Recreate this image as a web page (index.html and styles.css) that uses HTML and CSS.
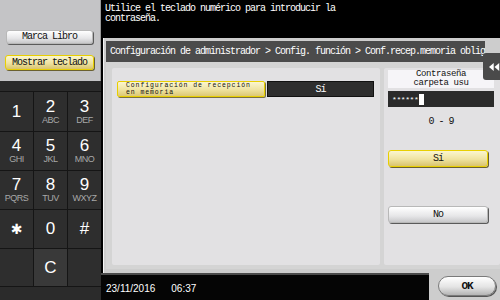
FILE: index.html
```html
<!DOCTYPE html>
<html lang="es">

<head>
    <meta charset="UTF-8" />
    <title>Configuración de administrador</title>
    <link rel="stylesheet" href="styles.css">
</head>

<body>
    <div class="screen">
        <aside class="side">
            <div class="side-top">
                <button class="btn btn-gray side-btn">Marca Libro</button>
                <button class="btn btn-yellow side-btn">Mostrar teclado</button>
            </div>
            <div class="keypad">
                <div class="key-strip"></div>
                <div class="key"><span class="num">1</span></div>
                <div class="key"><span class="num">2</span><span class="abc">ABC</span></div>
                <div class="key"><span class="num">3</span><span class="abc">DEF</span></div>
                <div class="key"><span class="num">4</span><span class="abc">GHI</span></div>
                <div class="key"><span class="num">5</span><span class="abc">JKL</span></div>
                <div class="key"><span class="num">6</span><span class="abc">MNO</span></div>
                <div class="key"><span class="num">7</span><span class="abc">PQRS</span></div>
                <div class="key"><span class="num">8</span><span class="abc">TUV</span></div>
                <div class="key"><span class="num">9</span><span class="abc">WXYZ</span></div>
                <div class="key"><span class="num star">✱</span></div>
                <div class="key"><span class="num">0</span></div>
                <div class="key"><span class="num">#</span></div>
                <div class="key key-empty"></div>
                <div class="key key-c"><span class="num">C</span></div>
                <div class="key key-empty"></div>
                <div class="key-strip"></div>
            </div>
        </aside>

        <main class="main">
            <div class="message">Utilice el teclado numérico para introducir la<br>contraseña.</div>

            <div class="panel">
                <div class="breadcrumb">Configuración de administrador &gt; Config. función &gt; Conf.recep.memoria oblig</div>
                <div class="collapse-tab">
                    <svg viewBox="0 0 14 10">
                        <path d="M6 0 L0 5 L6 10 Z M13 0 L7 5 L13 10 Z" />
                    </svg>
                </div>
                <div class="content">
                    <div class="settings">
                        <div class="setting-row">
                            <div class="setting-label">Configuración de recepción<br>en memoria</div>
                            <div class="setting-value">Sí</div>
                        </div>
                    </div>
                    <div class="entry">
                        <div class="entry-title">Contraseña<br>carpeta usu</div>
                        <div class="entry-field">******<span class="cursor"></span></div>
                        <div class="entry-range">0 - 9</div>
                        <button class="btn btn-yellow entry-btn entry-yes">Sí</button>
                        <button class="btn btn-gray entry-btn entry-no">No</button>
                    </div>
                </div>
            </div>

            <div class="footer">
                <div class="status">
                    <span>23/11/2016</span>
                    <span>06:37</span>
                </div>
                <div class="ok-area">
                    <button class="ok-btn">OK</button>
                </div>
            </div>
        </main>
    </div>
</body>

</html>
```

FILE: styles.css
```css
body {
    margin: 0;
    padding: 0;
    background-color: #000;
    font-family: "Liberation Mono", monospace;
}

.screen {
    width: 500px;
    height: 300px;
    display: grid;
    grid-template-columns: 101px 1fr;
    overflow: hidden;
}

/* left side with keypad */
.side {
    display: flex;
    flex-direction: column;
    background-color: #1c1c1c;
}

.side-top {
    height: 81px;
    background-color: #c4c4c6;
    display: flex;
    flex-direction: column;
    align-items: flex-start;
    padding: 30px 0 0 6px;
    box-sizing: border-box;
    border-right: 1px solid #9a9a9a;
}

.btn {
    font-family: "Liberation Mono", monospace;
    font-size: 10px;
    letter-spacing: -1px;
    color: #111;
    cursor: pointer;
    padding: 0;
}

.btn-gray {
    background: linear-gradient(#ffffff, #e6e6e8 60%, #c8c8ca);
    border: 1px solid #b8b8b8;
    border-radius: 3px;
    box-shadow: 1px 1px 0 #5a5a5a;
}

.btn-yellow {
    background: linear-gradient(#fbf6cf, #efe3a0 55%, #d9c46e);
    border: 1px solid #e8cf00;
    border-radius: 3px;
    box-shadow: 1px 1px 0 #6a6030;
}

.side-btn {
    width: 87px;
    height: 15px;
    margin-bottom: 11px;
}

.side-btn.btn-yellow {
    width: 89px;
    height: 17px;
    margin-left: -1px;
}

.keypad {
    flex: 1;
    display: grid;
    grid-template-columns: 33px 33px 33px;
    grid-template-rows: 10px 39px 38px 38px 38px 37px 1fr;
    gap: 1px;
    background-color: #151515;
}

.key-strip {
    grid-column: 1 / 4;
    background-color: #2b2b2b;
}

.key {
    background-color: #2e2e2e;
    display: flex;
    flex-direction: column;
    align-items: center;
    justify-content: center;
    font-family: "Liberation Sans", Arial, sans-serif;
    color: #fff;
}

.key .num {
    font-size: 17px;
    line-height: 16px;
}

.key .star {
    font-family: "DejaVu Sans", sans-serif;
    font-size: 14px;
}

.key .abc {
    font-size: 9px;
    line-height: 10px;
    color: #a8a8a8;
    letter-spacing: -0.5px;
}

.key-c {
    background-color: #393939;
}

/* right main area */
.main {
    display: flex;
    flex-direction: column;
    position: relative;
}

.message {
    height: 38px;
    box-sizing: border-box;
    padding: 4px 0 0 4px;
    color: #fff;
    font-size: 10px;
    line-height: 10px;
    letter-spacing: -1px;
}

.panel {
    flex: 1;
    margin-left: 2px;
    background-color: #cdcdcd;
    border-left: 1px solid #f4f4f4;
    padding: 3px 0 4px 2px;
    display: flex;
    flex-direction: column;
}

.breadcrumb {
    height: 21px;
    margin-right: 20px;
    background-color: #4b4b4b;
    color: #fff;
    font-size: 10px;
    letter-spacing: -1px;
    line-height: 21px;
    padding-left: 4px;
    white-space: nowrap;
    overflow: hidden;
}

.collapse-tab {
    position: absolute;
    right: 0;
    top: 53px;
    width: 22px;
    height: 27px;
    background-color: #4a4a4a;
    border-radius: 3px 0 0 3px;
    display: flex;
    justify-content: center;
    align-items: center;
}

.collapse-tab svg {
    width: 11px;
    height: 8px;
    fill: #fff;
}

.content {
    flex: 1;
    display: flex;
    gap: 4px;
    padding: 6px 5px 4px 6px;
    background-color: #d4d4d4;
}

.settings {
    width: 268px;
    background-color: #e2e1e3;
    border-radius: 2px;
    padding: 13px 0 0 5px;
    box-sizing: border-box;
}

.setting-row {
    display: flex;
    height: 16px;
}

.setting-label {
    width: 148px;
    box-sizing: border-box;
    background: linear-gradient(#fbf6cf, #efe3a0 55%, #dcc874);
    border: 1px solid #e8cf00;
    border-radius: 2px;
    box-shadow: 1px 1px 0 #7a7040;
    font-size: 6.5px;
    line-height: 7px;
    letter-spacing: 0.9px;
    padding: 0 0 0 8px;
    color: #111;
}

.setting-value {
    width: 105px;
    margin-left: 2px;
    background-color: #2e2e2e;
    border: 1px solid #111;
    color: #fff;
    font-size: 10px;
    letter-spacing: -1px;
    text-align: center;
    line-height: 15px;
}

.entry {
    flex: 1;
    background-color: #e2e1e3;
    border-radius: 2px;
    padding: 2px 6px 0 4px;
    display: flex;
    flex-direction: column;
}

.entry-title {
    background-color: #f6f5f8;
    font-size: 9px;
    letter-spacing: -0.4px;
    line-height: 9px;
    text-align: center;
    padding: 0;
    height: 18px;
    color: #111;
}

.entry-field {
    margin-top: 3px;
    height: 16px;
    background-color: #2b2b2b;
    color: #fff;
    font-size: 8px;
    padding-left: 4px;
    letter-spacing: -0.4px;
    display: flex;
    align-items: center;
}

.cursor {
    display: inline-block;
    width: 5px;
    height: 11px;
    background-color: #fff;
    margin-left: 1px;
}

.entry-range {
    margin-top: 9px;
    text-align: center;
    font-size: 10px;
    letter-spacing: -1px;
    color: #111;
}

.entry-btn {
    width: 100px;
    height: 17px;
}

.entry-yes {
    margin-top: 23px;
}

.entry-no {
    margin-top: 39px;
}

/* bottom status bar */
.footer {
    height: 27px;
    display: flex;
}

.status {
    flex: 1;
    background-color: #050505;
    border-top: 2px solid #4a4a4a;
    color: #fff;
    font-family: "Liberation Sans", Arial, sans-serif;
    font-size: 10px;
    padding: 8px 0 0 5px;
    display: flex;
    gap: 16px;
}

.ok-area {
    width: 76px;
    background-color: #cdcdcd;
    display: flex;
    align-items: center;
    justify-content: center;
    padding-bottom: 2px;
    box-sizing: border-box;
}

.ok-btn {
    width: 58px;
    height: 20px;
    border-radius: 10px;
    border: 1px solid #7a7a7a;
    background: linear-gradient(#ffffff, #e4e4e4 55%, #b4b4b4);
    box-shadow: 1px 1px 0 #555;
    font-family: "Liberation Mono", monospace;
    font-size: 11px;
    font-weight: bold;
    letter-spacing: -1px;
    color: #111;
}
```
